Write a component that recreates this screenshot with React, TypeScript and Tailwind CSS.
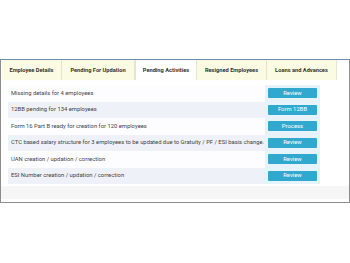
import React from "react";

const tabs = [
  { label: "Employee Details", w: 60 },
  { label: "Pending For Updation", w: 73 },
  { label: "Pending Activities", w: 62, active: true },
  { label: "Resigned Employees", w: 70 },
  { label: "Loans and Advances", w: 70 },
];

const rows = [
  { text: "Missing details for 4 employees", btn: "Review" },
  { text: "12BB pending for 134 employees", btn: "Form 12BB" },
  { text: "Form 16 Part B ready for creation for 120 employees", btn: "Process" },
  {
    text: "CTC based salary structure for 3 employees to be updated due to Gratuity / PF / ESI basis change.",
    btn: "Review",
  },
  { text: "UAN creation / updation / correction", btn: "Review" },
  { text: "ESI Number creation / updation / correction", btn: "Review" },
];

export default function App() {
  return (
    <div
      className="w-[350px] h-[263px] bg-white relative overflow-hidden"
      style={{ fontFamily: "Roboto, 'Liberation Sans', sans-serif" }}
    >
      <div className="mt-[59px] w-[350px] h-[144px] border border-[#8c8c8c] border-t-[#6f8ca8] flex flex-col bg-white">
        <div className="flex h-[20px] pl-[1px] bg-white">
          {tabs.map((t) => (
            <div
              key={t.label}
              style={{ width: t.w }}
              className={
                "h-full flex items-center justify-center text-[5.7px] font-bold text-[#333] border-r border-[#e6e6cf] whitespace-nowrap " +
                (t.active ? "bg-white border-l border-[#e2e2e2]" : "bg-[#fbfbe3]")
              }
            >
              {t.label}
            </div>
          ))}
        </div>
        <div className="flex-1 bg-white pl-[7px] pr-[2px] pt-[5px] flex flex-col">
          <div className="flex w-[312px]">
            <div className="flex-1 flex flex-col">
              {rows.map((r, i) => (
                <div
                  key={i}
                  className={
                    "h-[16.5px] flex items-center pl-[3px] text-[5.85px] text-[#444] whitespace-nowrap " +
                    (i % 2 === 1 ? "bg-[#eff1f9]" : "bg-[#fdfdff]")
                  }
                >
                  {r.text}
                </div>
              ))}
            </div>
            <div className="w-[55px] flex flex-col bg-[#e7f3fb]">
              {rows.map((r, i) => (
                <div key={i} className="h-[16.5px] flex items-center justify-center">
                  <div className="w-[49px] h-[10px] bg-[#31a9cf] rounded-[1px] flex items-center justify-center text-white text-[5.9px]">
                    {r.btn}
                  </div>
                </div>
              ))}
            </div>
          </div>
          <div className="mt-[2px] h-[13px] bg-[#f6f6f6] -ml-[7px] mr-[-2px]" />
        </div>
      </div>
    </div>
  );
}
